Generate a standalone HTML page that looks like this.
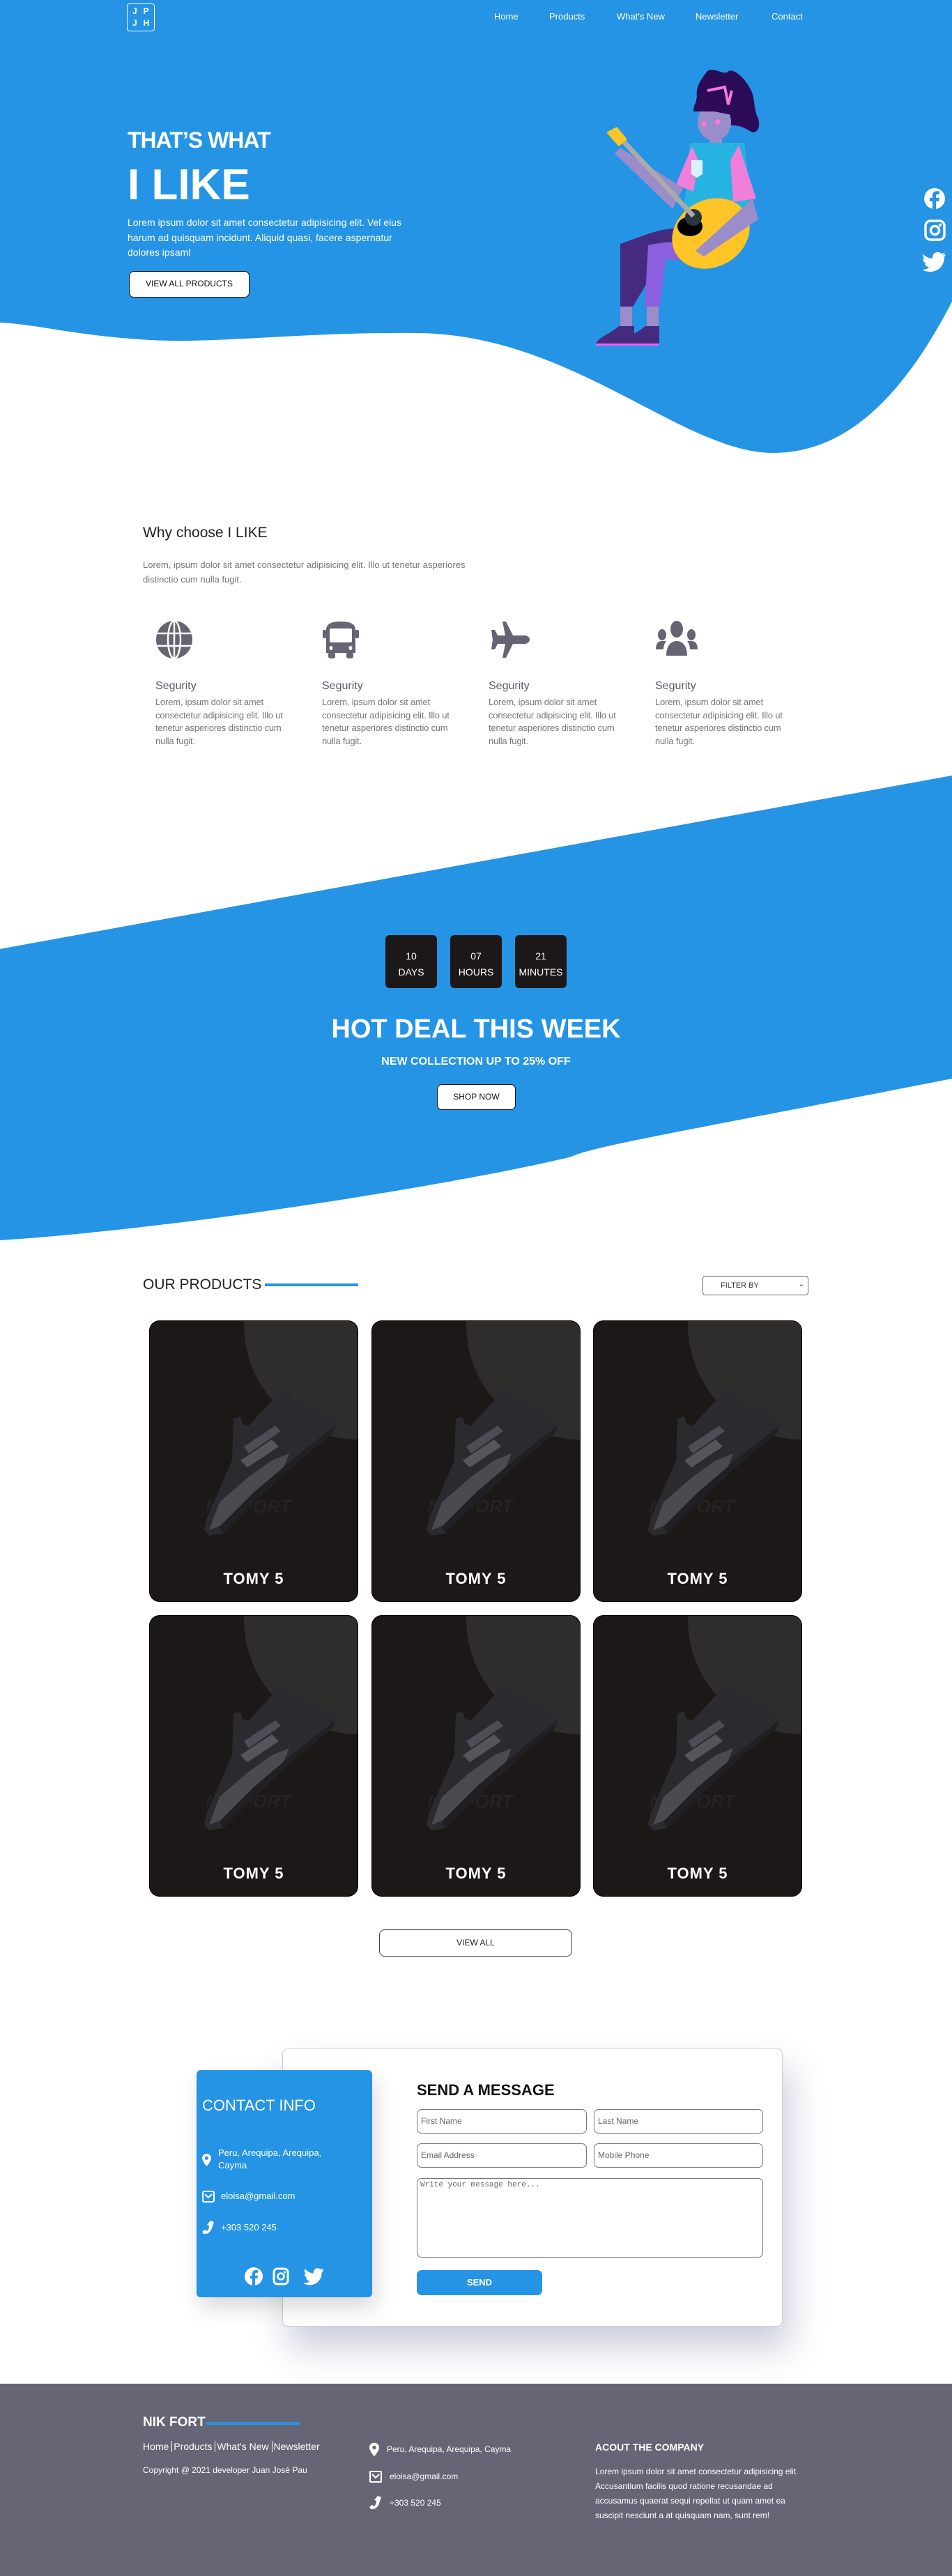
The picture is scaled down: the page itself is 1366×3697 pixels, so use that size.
<!DOCTYPE html>
<html><head><meta charset="utf-8">
<style>
*{margin:0;padding:0;box-sizing:border-box}
body{width:1366px;height:3697px;position:relative;overflow:hidden;background:#fff;font-family:"Liberation Sans",Arial,sans-serif;color:#222}
.a{position:absolute}
.nav a{position:absolute;top:16px;color:#fff;font-size:13px;text-decoration:none}
.feat{position:absolute;top:890px;width:190px}
.feat h4{font-weight:normal;font-size:16px;color:#5a5a66;margin-top:30px}
.feat p{font-size:13px;line-height:18.5px;color:#777;margin-top:5px;letter-spacing:-.2px}
.cd{position:absolute;top:1342px;width:74px;height:76px;background:#1c1817;border-radius:6px;color:#fff;font-size:14px;text-align:center;padding-top:19px;line-height:23px}
.card{position:absolute;width:300px;height:404px;background:#1c1817;border-radius:15px;overflow:hidden;border:1px solid #000}
.card .t{position:absolute;left:0;right:0;top:357px;text-align:center;color:#fff;font-weight:bold;font-size:22px;letter-spacing:1px}
.inp{position:absolute;height:35px;border:1px solid #777;border-radius:7px;font-size:12px;color:#666;padding:9px 5px}
.ftxt{color:#fff;font-size:13px}
</style></head><body>

<svg class="a" style="left:0;top:0" width="1366" height="700">
<path d="M0 0H1366V433C1300 560 1220 650 1109 650C980 650 820 480 600 478C430 476 300 495 200 487C100 480 50 465 0 463Z" fill="#2594e5"/>
</svg>

<div class="a" style="left:182px;top:5px;width:40px;height:40px;border:1.5px solid #fff;border-radius:4px;color:#fff;font-size:12px;font-weight:bold;line-height:17px;padding:2px 0 0 7px;letter-spacing:9px">JP<br>JH</div>
<div class="nav"><a style="left:709px">Home</a><a style="left:788px">Products</a><a style="left:885px">What's New</a><a style="left:998px">Newsletter</a><a style="left:1107px">Contact</a></div>

<div class="a" style="left:183px;top:183px;color:#fff;font-size:32px;font-weight:bold;letter-spacing:-1px">THAT’S WHAT</div>
<div class="a" style="left:183px;top:230px;color:#fff;font-size:62px;font-weight:bold">I LIKE</div>
<div class="a" style="left:183px;top:309px;width:425px;color:#fff;font-size:14px;line-height:21.5px">Lorem ipsum dolor sit amet consectetur adipisicing elit. Vel eius harum ad quisquam incidunt. Aliquid quasi, facere aspernatur dolores ipsaml</div>
<div class="a" style="left:185px;top:389px;width:173px;height:38px;background:#fff;border:1.5px solid #111;border-radius:7px;font-size:12px;text-align:center;line-height:35px;color:#111">VIEW ALL PRODUCTS</div>

<svg class="a" style="left:830px;top:90px" width="300" height="420" viewBox="0 0 300 420">
<path d="M185 12C195 5 210 20 215 12C225 8 240 25 245 35C255 50 250 65 258 80C262 95 255 100 250 100C240 95 235 90 220 90L190 60C175 70 165 60 170 50C168 35 175 25 185 12Z" fill="#2c0b59"/>
<ellipse cx="195" cy="85" rx="24" ry="27" fill="#9a8dc9"/>
<path d="M165 70C165 50 185 40 205 45C220 50 225 60 220 75L195 70Z" fill="#2c0b59"/>
<path d="M185 40L210 35L215 60L220 40" stroke="#f27ad5" stroke-width="4" fill="none"/>
<circle cx="180" cy="88" r="4" fill="#f27ad5"/><circle cx="200" cy="85" r="4" fill="#f27ad5"/>
<rect x="188" y="102" width="18" height="16" fill="#9a8dc9"/>
<path d="M160 115H238L250 228H150Z" fill="#27b3e1"/>
<path d="M163 120L140 175L165 185L172 140Z" fill="#f07fd9"/>
<path d="M230 118L255 195L222 200L218 140Z" fill="#f07fd9"/>
<path d="M162 140L178 140L178 160L170 165L162 160Z" fill="#d8f3fb"/>
<path d="M150 180L60 122L52 130L135 210Z" fill="#9a8dc9"/>
<path d="M60 260C90 250 120 235 150 238L160 280L120 280L78 350L60 350Z" fill="#452b80"/>
<path d="M100 262C130 255 165 255 170 270L168 285L125 282L117 350L95 350Z" fill="#8b5fe0"/>
<ellipse cx="190" cy="245" rx="58" ry="48" transform="rotate(-30 190 245)" fill="#ffc425"/>
<ellipse cx="160" cy="235" rx="18" ry="14" fill="#000"/>
<circle cx="165" cy="222" r="12" fill="#25373b"/>
<path d="M60 108L165 220" stroke="#aaa" stroke-width="7"/>
<path d="M40 100L55 92L70 110L58 120Z" fill="#ffc425"/>
<path d="M250 195L258 225L180 278L168 270Z" fill="#9a8dc9"/>
<rect x="60" y="350" width="17" height="30" fill="#9a8dc9"/><rect x="98" y="350" width="17" height="30" fill="#9a8dc9"/>
<path d="M58 378L80 378L80 405L25 405C25 395 45 390 58 378Z" fill="#452b80"/>
<path d="M96 378L116 378L116 405L62 405C62 395 82 390 96 378Z" fill="#452b80"/>
<rect x="25" y="403" width="91" height="3" fill="#f65ff0"/>
</svg>

<svg class="a" style="left:1324px;top:268px" width="34" height="124" viewBox="0 0 34 124" fill="#fff">
<circle cx="17" cy="17" r="15"/><path d="M19 33V21H23L24 16H19V13C19 11.5 20 11 21.5 11H24V6.5C23 6.4 21.5 6.2 20 6.2C16.5 6.2 14 8.4 14 12.3V16H10V21H14V33Z" fill="#2594e5"/>
<rect x="4" y="49" width="27" height="27" rx="7" fill="none" stroke="#fff" stroke-width="3.5"/><circle cx="17.5" cy="62.5" r="6" fill="none" stroke="#fff" stroke-width="3.5"/><circle cx="25" cy="55" r="2"/>
<path d="M33 97C31.5 97.7 30 98 28.5 98.3C30 97.3 31.3 96 31.8 94.3C30.3 95.2 28.7 95.8 27 96.2C25.6 94.7 23.6 93.8 21.5 93.8C17.4 93.8 14 97.2 14 101.3C14 101.9 14.1 102.5 14.2 103C8 102.7 2.5 99.7 -1 95.2C0 99 0.6 101.5 3 103.5C1.8 103.5 0.7 103.1 0 102.7C0 106.4 2.5 109.4 6 110.1C4.8 110.5 3.7 110.5 2.6 110.2C3.6 113.3 6.4 115.4 9.7 115.5C6.4 118 2.3 119.3 -1 119C2.4 121 6.3 122 10.5 122C24 122 31 111 31 101.5V100.6C32.3 99.7 32.5 98.5 33 97Z"/>
</svg>

<div class="a" style="left:205px;top:753px;font-size:21px;color:#222">Why choose I LIKE</div>
<div class="a" style="left:205px;top:800px;width:480px;font-size:13px;line-height:21px;color:#777">Lorem, ipsum dolor sit amet consectetur adipisicing elit. Illo ut tenetur asperiores distinctio cum nulla fugit.</div>

<svg class="a" style="left:223px;top:890px" width="54" height="56" viewBox="0 0 54 56" fill="#646473">
<ellipse cx="27" cy="28" rx="26" ry="27"/>
<g stroke="#fff" stroke-width="2.5" fill="none"><ellipse cx="27" cy="28" rx="9" ry="27"/><line x1="27" y1="0" x2="27" y2="56"/><line x1="0" y1="19" x2="54" y2="19"/><line x1="0" y1="37" x2="54" y2="37"/></g>
</svg>
<div class="feat" style="left:223px"><div style="height:56px"></div><h4>Segurity</h4><p>Lorem, ipsum dolor sit amet consectetur adipisicing elit. Illo ut tenetur asperiores distinctio cum nulla fugit.</p></div>

<svg class="a" style="left:462px;top:890px" width="54" height="56" viewBox="0 0 54 56" fill="#646473">
<path d="M6 14C6 4 16 2 27 2C38 2 48 4 48 14V47H6Z"/><rect x="1" y="14" width="5" height="12" rx="2"/><rect x="48" y="14" width="5" height="12" rx="2"/>
<rect x="9" y="46" width="10" height="9" rx="3"/><rect x="35" y="46" width="10" height="9" rx="3"/>
<rect x="11" y="12" width="32" height="20" rx="2" fill="#fff"/><ellipse cx="13" cy="40" rx="2.5" ry="3" fill="#fff"/><ellipse cx="41" cy="40" rx="2.5" ry="3" fill="#fff"/>
</svg>
<div class="feat" style="left:462px"><div style="height:56px"></div><h4>Segurity</h4><p>Lorem, ipsum dolor sit amet consectetur adipisicing elit. Illo ut tenetur asperiores distinctio cum nulla fugit.</p></div>

<svg class="a" style="left:701px;top:890px" width="60" height="56" viewBox="0 0 60 56" fill="#646473">
<path d="M20 2H25L35 22H52C56 22 59 25 59 28C59 31 56 34 52 34H35L25 54H20L24 34H13L9 42H4L6 28L4 14H9L13 22H24Z"/>
</svg>
<div class="feat" style="left:701px"><div style="height:56px"></div><h4>Segurity</h4><p>Lorem, ipsum dolor sit amet consectetur adipisicing elit. Illo ut tenetur asperiores distinctio cum nulla fugit.</p></div>

<svg class="a" style="left:940px;top:890px" width="62" height="56" viewBox="0 0 62 56" fill="#646473">
<ellipse cx="31" cy="13" rx="9" ry="12"/><ellipse cx="10" cy="21" rx="6" ry="8"/><ellipse cx="52" cy="21" rx="6" ry="8"/>
<path d="M16 51C16 38 22 30 31 30C40 30 46 38 46 51Z"/><path d="M1 42C1 34 4 30 10 30H16C13 34 12 38 12 42Z"/><path d="M61 42C61 34 58 30 52 30H46C49 34 50 38 50 42Z"/>
</svg>
<div class="feat" style="left:940px"><div style="height:56px"></div><h4>Segurity</h4><p>Lorem, ipsum dolor sit amet consectetur adipisicing elit. Illo ut tenetur asperiores distinctio cum nulla fugit.</p></div>

<svg class="a" style="left:0;top:1100px" width="1366" height="700">
<path d="M0 262L1366 13V448C1000 520 850 545 820 560C700 590 300 660 0 680Z" fill="#2594e5"/>
</svg>
<div class="cd" style="left:553px">10<br>DAYS</div>
<div class="cd" style="left:646px">07<br>HOURS</div>
<div class="cd" style="left:739px">21<br>MINUTES</div>
<div class="a" style="left:0;width:1366px;top:1456px;text-align:center;color:#fff;font-size:38px;font-weight:bold">HOT DEAL THIS WEEK</div>
<div class="a" style="left:0;width:1366px;top:1515px;text-align:center;color:#fff;font-size:16px;font-weight:bold">NEW COLLECTION UP TO 25% OFF</div>
<div class="a" style="left:627px;top:1556px;width:113px;height:37px;background:#fff;border:1.5px solid #111;border-radius:7px;font-size:12px;text-align:center;line-height:34px;color:#111">SHOP NOW</div>

<div class="a" style="left:205px;top:1832px;font-size:21px;color:#222">OUR PRODUCTS</div>
<div class="a" style="left:380px;top:1842px;width:134px;height:4px;background:#2594e5"></div>
<div class="a" style="left:1008px;top:1831px;width:152px;height:28px;border:1px solid #666;border-radius:4px;font-size:11px;color:#333;padding:7px 0 0 25px">FILTER BY<span style="position:absolute;right:5px;top:6px;font-size:10px">&#8964;</span></div>

<svg width="0" height="0" style="position:absolute"><defs>
<g id="shoe">
<circle cx="300" cy="5" r="165" fill="#2f2d2c"/>
<text x="80" y="275" font-family="Liberation Sans" font-size="26" font-weight="bold" font-style="italic" fill="#262222">NIK FORT</text>
<path d="M78 300L82 282L118 200L120 140L130 137L133 148L142 150L188 100L197 94L204 100L203 110L248 130L267 143L262 162L215 200L155 255L105 305L85 308Z" fill="#2a2a2f"/>
<path d="M85 300L100 260L140 225L175 200L200 190L190 215L150 250L110 290Z" fill="#4a4a50"/>
<path d="M130 200L175 170L185 180L140 210Z" fill="#55555c"/>
<path d="M135 180L180 150L188 158L142 190Z" fill="#4d4d55"/>
<path d="M105 305L155 255L215 200L262 162L266 150L215 190L150 245L100 295Z" fill="#1f1f24"/>
</g></defs></svg>

<div class="card" style="left:214px;top:1895px"><svg width="300" height="404"><use href="#shoe"/></svg><div class="t">TOMY 5</div></div>
<div class="card" style="left:533px;top:1895px"><svg width="300" height="404"><use href="#shoe"/></svg><div class="t">TOMY 5</div></div>
<div class="card" style="left:851px;top:1895px"><svg width="300" height="404"><use href="#shoe"/></svg><div class="t">TOMY 5</div></div>
<div class="card" style="left:214px;top:2318px"><svg width="300" height="404"><use href="#shoe"/></svg><div class="t">TOMY 5</div></div>
<div class="card" style="left:533px;top:2318px"><svg width="300" height="404"><use href="#shoe"/></svg><div class="t">TOMY 5</div></div>
<div class="card" style="left:851px;top:2318px"><svg width="300" height="404"><use href="#shoe"/></svg><div class="t">TOMY 5</div></div>

<div class="a" style="left:544px;top:2769px;width:277px;height:39px;border:1.5px solid #444;border-radius:8px;font-size:12px;text-align:center;line-height:36px;color:#222">VIEW ALL</div>

<div class="a" style="left:405px;top:2940px;width:718px;height:399px;background:#fff;border:1px solid #ccc;border-radius:8px;box-shadow:10px 30px 50px rgba(80,90,140,.3)"></div>
<div class="a" style="left:282px;top:2971px;width:252px;height:326px;background:#2594e5;border-radius:6px;box-shadow:5px 15px 30px rgba(0,0,0,.15)"></div>
<div class="a" style="left:290px;top:3009px;color:#fff;font-size:22px">CONTACT INFO</div>
<svg class="a" style="left:290px;top:3091px" width="13" height="18" viewBox="0 0 13 18"><path d="M6.5 0C2.9 0 0 2.8 0 6.3C0 11 6.5 18 6.5 18S13 11 13 6.3C13 2.8 10.1 0 6.5 0Z" fill="#fff"/><circle cx="6.5" cy="6.3" r="2.5" fill="#2594e5"/></svg>
<div class="a ftxt" style="left:313px;top:3081px;line-height:18px;width:170px">Peru, Arequipa, Arequipa, Cayma</div>
<svg class="a" style="left:290px;top:3144px" width="18" height="17" viewBox="0 0 18 17"><rect x="1" y="1" width="16" height="15" rx="2" fill="none" stroke="#fff" stroke-width="2"/><path d="M4 5L9 10L14 5" stroke="#fff" stroke-width="2" fill="none"/></svg>
<div class="a ftxt" style="left:317px;top:3144px">eloisa@gmail.com</div>
<svg class="a" style="left:290px;top:3187px" width="18" height="20" viewBox="0 0 18 20"><path d="M12 0L17 2L14 11C12 17 7 20 2 19L0 16L4 13L7 15C9 13 10 10 10 7L7 6Z" fill="#fff"/></svg>
<div class="a ftxt" style="left:317px;top:3189px">+303 520 245</div>
<svg class="a" style="left:350px;top:3253px" width="116" height="28" viewBox="0 0 116 28" fill="#fff">
<circle cx="14" cy="14" r="13"/><path d="M16 27V17H19.5L20 13H16V10.5C16 9.3 16.6 8.8 17.8 8.8H20V5.2C19.3 5.1 18 5 16.8 5C14 5 12 6.8 12 10V13H9V17H12V27Z" fill="#2594e5"/>
<rect x="43" y="3" width="20" height="22" rx="5" fill="none" stroke="#fff" stroke-width="3"/><circle cx="53" cy="14" r="4.5" fill="none" stroke="#fff" stroke-width="2.5"/><circle cx="58.5" cy="8" r="1.5"/>
<path d="M115 5C114 5.5 112.8 5.8 111.6 6C112.8 5.2 113.8 4 114.2 2.6C113 3.3 111.7 3.8 110.3 4.1C109.2 2.9 107.6 2.2 105.8 2.2C102.5 2.2 99.8 4.9 99.8 8.2C99.8 8.7 99.9 9.1 100 9.6C95 9.3 90.6 6.9 87.7 3.3C86 6 87.3 9.6 89.6 11.2C88.6 11.2 87.7 10.9 87 10.5C87 13.4 89 15.9 91.8 16.4C90.9 16.7 90 16.7 89 16.5C89.8 19 92.1 20.7 94.8 20.8C92 23 88.7 24 85 23.7C87.8 25.4 91 26.4 94.5 26.4C105.6 26.4 111.6 17.2 111.6 9.3V8.5C112.8 7.6 114 6.4 115 5Z"/>
</svg>

<div class="a" style="left:598px;top:2987px;font-size:22px;font-weight:bold;color:#111">SEND A MESSAGE</div>
<div class="inp" style="left:598px;top:3027px;width:244px">First Name</div>
<div class="inp" style="left:852px;top:3027px;width:243px">Last Name</div>
<div class="inp" style="left:598px;top:3076px;width:244px">Email Address</div>
<div class="inp" style="left:852px;top:3076px;width:243px">Mobile Phone</div>
<div class="inp" style="left:598px;top:3126px;width:497px;height:114px;font-family:'Liberation Mono',monospace;font-size:11px;padding:3px 4px">Write your message here...</div>
<div class="a" style="left:598px;top:3258px;width:180px;height:36px;background:#2594e5;border-radius:7px;color:#fff;font-size:13px;font-weight:bold;text-align:center;line-height:36px">SEND</div>

<div class="a" style="left:0;top:3421px;width:1366px;height:276px;background:#656575"></div>
<div class="a" style="left:205px;top:3466px;color:#fff;font-size:19px;font-weight:bold">NIK FORT</div>
<div class="a" style="left:296px;top:3476px;width:134px;height:4px;background:#2594e5"></div>
<div class="a ftxt" style="left:205px;top:3503px;font-size:14px">Home <span style="border-left:1px solid #fff;padding-left:2px">Products</span> <span style="border-left:1px solid #fff;padding-left:2px">What's New</span> <span style="border-left:1px solid #fff;padding-left:2px">Newsletter</span></div>
<div class="a ftxt" style="left:205px;top:3538px;font-size:12px">Copyright @ 2021 developer Juan José Pau</div>
<svg class="a" style="left:530px;top:3505px" width="14" height="21" viewBox="0 0 13 18"><path d="M6.5 0C2.9 0 0 2.8 0 6.3C0 11 6.5 18 6.5 18S13 11 13 6.3C13 2.8 10.1 0 6.5 0Z" fill="#fff"/><circle cx="6.5" cy="6.3" r="2.5" fill="#656575"/></svg>
<div class="a ftxt" style="left:555px;top:3508px;font-size:12px">Peru, Arequipa, Arequipa, Cayma</div>
<svg class="a" style="left:530px;top:3546px" width="18" height="17" viewBox="0 0 18 17"><rect x="1" y="1" width="16" height="15" rx="1" fill="none" stroke="#fff" stroke-width="2"/><path d="M4 5L9 10L14 5" stroke="#fff" stroke-width="2" fill="none"/></svg>
<div class="a ftxt" style="left:559px;top:3547px;font-size:12px">eloisa@gmail.com</div>
<svg class="a" style="left:530px;top:3581px" width="18" height="22" viewBox="0 0 18 20"><path d="M12 0L17 2L14 11C12 17 7 20 2 19L0 16L4 13L7 15C9 13 10 10 10 7L7 6Z" fill="#fff"/></svg>
<div class="a ftxt" style="left:559px;top:3585px;font-size:12px">+303 520 245</div>
<div class="a ftxt" style="left:854px;top:3504px;font-size:14px;font-weight:bold">ACOUT THE COMPANY</div>
<div class="a ftxt" style="left:854px;top:3537px;width:310px;font-size:12px;line-height:21px">Lorem ipsum dolor sit amet consectetur adipisicing elit. Accusantium facilis quod ratione recusandae ad accusamus quaerat sequi repellat ut quam amet ea suscipit nesciunt a at quisquam nam, sunt rem!</div>

</body></html>
